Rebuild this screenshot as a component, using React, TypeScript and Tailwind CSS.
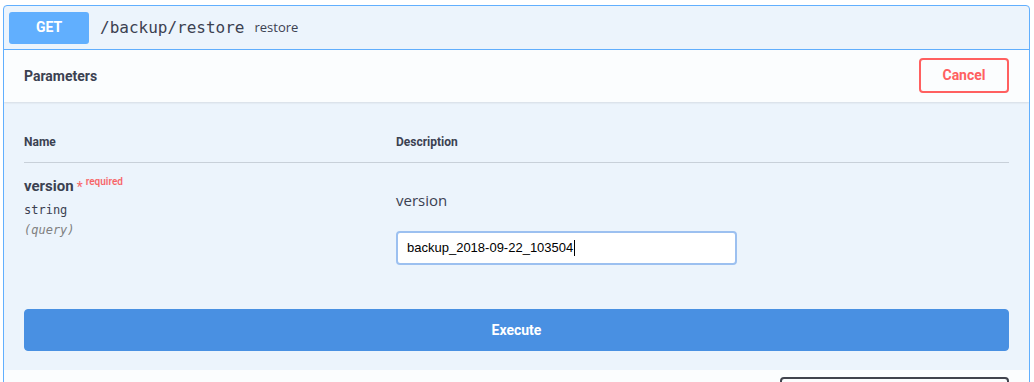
import React from "react";

export default function App() {
  return (
    <div className="w-[1034px] h-[382px] overflow-hidden bg-white pt-[5px] pl-[3px] pr-[4px]">
      <div className="border border-[#61affe] rounded-[4px] bg-[#ecf4fc] overflow-hidden">
        {/* summary */}
        <div className="flex items-center p-[5px] border-b border-[#61affe] h-[44px]">
          <div className="w-[80px] h-[32px] rounded-[3px] bg-[#61affe] text-white font-bold text-[14px] flex items-center justify-center font-['Roboto',sans-serif]">
            GET
          </div>
          <span className="ml-[11px] text-[16px] text-[#3b4151] font-['DejaVu_Sans_Mono',monospace]">
            /backup/restore
          </span>
          <span className="ml-[10px] text-[13px] text-[#3b4151] font-['Open_Sans',sans-serif]">
            restore
          </span>
        </div>

        {/* parameters header */}
        <div className="flex items-center justify-between h-[52px] px-[20px] bg-white/80 shadow-[0_1px_2px_rgba(0,0,0,0.1)]">
          <span className="text-[14px] font-bold text-[#3b4151] font-['Roboto',sans-serif]">
            Parameters
          </span>
          <button className="w-[90px] h-[35px] -mt-px border-2 border-[#ff6060] rounded-[4px] text-[#ff6060] text-[14px] font-bold bg-transparent font-['Roboto',sans-serif]">
            Cancel
          </button>
        </div>

        {/* table */}
        <div className="px-[20px] pt-[20px] font-['Roboto',sans-serif]">
          <div className="flex border-b border-[#3b4151]/20 h-[41px] items-center text-[12px] font-bold text-[#3b4151]">
            <div className="w-[372px]">Name</div>
            <div>Description</div>
          </div>
          <div className="flex pt-[12px]">
            <div className="w-[372px]">
              <div className="flex items-start">
                <span className="text-[15px] font-bold text-[#3b4151] leading-[22px]">version</span>
                <span className="ml-[3px] text-[#ff0000]/60 text-[14px] leading-[22px] mt-px">*</span>
                <span className="ml-[3px] text-[#ff0000]/60 text-[10px] font-semibold leading-[12px] mt-[1px]">
                  required
                </span>
              </div>
              <div className="mt-[2px] text-[12px] text-[#3b4151] leading-[20px] font-['DejaVu_Sans_Mono',monospace]">
                string
              </div>
              <div className="text-[12px] italic text-[#808080] leading-[20px] font-['DejaVu_Sans_Mono',monospace]">
                (query)
              </div>
            </div>
            <div>
              <div className="mt-[15px] text-[15px] text-[#3b4151] leading-[20px] font-['Open_Sans',sans-serif]">
                version
              </div>
              <div className="mt-[21px] w-[341px] h-[34px] bg-white border-2 border-[#9cc0f0] rounded-[4px] flex items-center pl-[9px] text-[13px] text-black font-['Liberation_Sans',Arial,sans-serif]">
                backup_2018-09-22_103504
                <span className="inline-block w-px h-[16px] bg-black ml-px" />
              </div>
            </div>
          </div>
        </div>

        {/* execute */}
        <div className="px-[20px] pt-[44px] pb-[19px]">
          <button className="w-full h-[42px] rounded-[4px] bg-[#4990e2] border border-[#4990e2] text-white text-[14px] font-bold font-['Roboto',sans-serif]">
            Execute
          </button>
        </div>

        {/* responses */}
        <div className="bg-white/80 h-[40px] flex justify-end pr-[20px] pt-[7px]">
          <div className="w-[229px] h-[30px] border-2 border-[#41444e] rounded-[4px]" />
        </div>
      </div>
    </div>
  );
}
